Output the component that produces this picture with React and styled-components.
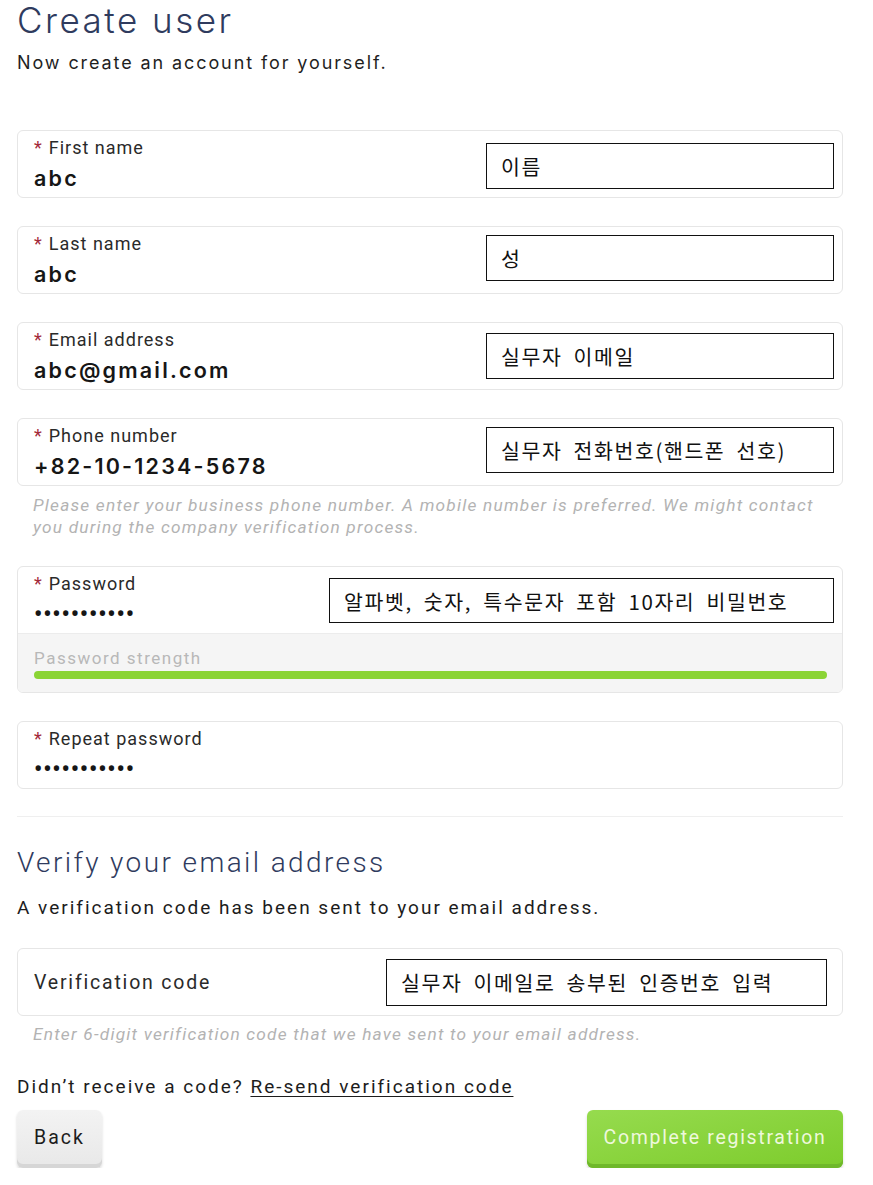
import React from 'react'
import styled, { createGlobalStyle } from 'styled-components'

const GlobalStyle = createGlobalStyle`
  body {
    margin: 0;
    background: #ffffff;
    font-family: Roboto, 'Liberation Sans', sans-serif;
    color: #1c1c1c;
  }
`

const Page = styled.div`
  width: 826px;
  padding: 0 30px 0 17px;
  display: flex;
  flex-direction: column;
`

const Title = styled.h1`
  margin: 0;
  font-family: Inter, Roboto, sans-serif;
  font-weight: 300;
  font-size: 35px;
  line-height: 40px;
  letter-spacing: 2.5px;
  color: #2f3b5e;
`

const Lead = styled.p`
  margin: 3px 0 0;
  font-family: Inter, Roboto, sans-serif;
  font-size: 18px;
  line-height: 40px;
  letter-spacing: 1.9px;
  color: #1f1f1f;
`

const Card = styled.div`
  margin-top: ${(p) => p.mt}px;
  border: 1px solid #e6e6e6;
  border-radius: 6px;
  background: #fff;
  overflow: hidden;
`

const CardRow = styled.div`
  height: 66px;
  display: flex;
  align-items: ${(p) => (p.center ? 'center' : 'flex-start')};
  justify-content: space-between;
  padding: 0 8px 0 16px;
`

const FieldCol = styled.div`
  display: flex;
  flex-direction: column;
  padding-top: 6px;
`

const Label = styled.div`
  font-size: 18px;
  line-height: 22px;
  letter-spacing: 1px;
  color: #2a2a2a;
`

const Star = styled.span`
  color: #a32a3a;
  margin-right: 7px;
  letter-spacing: 0;
`

const Value = styled.div`
  font-family: Inter, Roboto, sans-serif;
  font-weight: 600;
  font-size: 21.5px;
  line-height: 30px;
  margin-top: 4px;
  letter-spacing: 2.2px;
  color: #161616;
`

const Dots = styled.div`
  font-family: Roboto, sans-serif;
  font-weight: 700;
  font-size: 23px;
  line-height: 30px;
  margin-top: 5px;
  letter-spacing: 0.9px;
  color: #161616;
`

const Note = styled.div`
  margin-top: ${(p) => (p.mt ? p.mt : 0)}px;
  margin-right: ${(p) => (p.mr ? p.mr : 0)}px;
  width: ${(p) => p.w}px;
  height: ${(p) => p.h}px;
  border: 1px solid #111;
  background: #fff;
  display: flex;
  align-items: center;
  padding-left: 14px;
  box-sizing: border-box;
  font-family: 'Noto Sans CJK KR', sans-serif;
  font-size: 20.5px;
  letter-spacing: 1.6px;
  word-spacing: 5px;
  color: #111;
  white-space: pre;
`

const Hint = styled.div`
  margin-top: ${(p) => p.mt}px;
  padding-left: 16px;
  font-style: italic;
  font-size: 17.3px;
  line-height: 22px;
  letter-spacing: 1.2px;
  color: #b3b3b3;
`

const Strength = styled.div`
  background: #f5f5f5;
  border-top: 1px solid #ececec;
  padding: 13px 15px 13px 16px;
`

const StrengthLabel = styled.div`
  font-size: 17px;
  line-height: 22px;
  letter-spacing: 1.5px;
  color: #b8b8b8;
`

const Bar = styled.div`
  margin-top: 2px;
  height: 8px;
  border-radius: 4px;
  background: #8bd435;
`

const Divider = styled.hr`
  margin: 27px 0 0;
  border: 0;
  border-top: 1px solid #efefef;
`

const SubTitle = styled.h2`
  margin: 28px 0 0;
  font-weight: 300;
  font-size: 28px;
  line-height: 36px;
  letter-spacing: 2.4px;
  color: #2f3b5e;
`

const Text = styled.p`
  margin: ${(p) => p.mt}px 0 0;
  font-size: 19px;
  line-height: 24px;
  letter-spacing: 2px;
  color: #1c1c1c;
`

const CodeLabel = styled.div`
  font-size: 19.5px;
  letter-spacing: 1.8px;
  color: #2a2a2a;
`

const Link = styled.a`
  color: #1c1c1c;
  text-decoration: underline;
  text-underline-offset: 3px;
`

const Actions = styled.div`
  margin-top: 11px;
  display: flex;
  justify-content: space-between;
  align-items: flex-start;
`

const Button = styled.button`
  height: 58px;
  width: ${(p) => (p.primary ? '256px' : '85px')};
  padding: 0 0 4px;
  border: 0;
  border-radius: 6px;
  font-family: Roboto, sans-serif;
  font-size: 19.5px;
  letter-spacing: ${(p) => (p.primary ? 1.7 : 2)}px;
  color: ${(p) => (p.primary ? '#eef8dc' : '#1c1c1c')};
  background: ${(p) =>
    p.primary
      ? 'linear-gradient(to bottom right, #96db4e, #7dcc2c)'
      : 'linear-gradient(to bottom, #f3f3f3, #e8e8e8)'};
  box-shadow: ${(p) =>
    p.primary
      ? 'inset 0 -4px 0 #6fb82a, 0 2px 3px rgba(0,0,0,0.15)'
      : 'inset 0 -4px 0 #d6d6d6, 0 2px 3px rgba(0,0,0,0.15)'};
`

const fields = [
  { label: 'First name', value: 'abc', note: '이름', noteTop: 12, mt: 47 },
  { label: 'Last name', value: 'abc', note: '성', noteTop: 8, mt: 28 },
  { label: 'Email address', value: 'abc@gmail.com', note: '실무자 이메일', noteTop: 10, mt: 28 },
  { label: 'Phone number', value: '+82-10-1234-5678', note: '실무자 전화번호(핸드폰 선호)', noteTop: 8, mt: 28 },
]

const App = () => (
  <>
    <GlobalStyle />
    <Page>
      <Title>Create user</Title>
      <Lead>Now create an account for yourself.</Lead>

      {fields.map((f) => (
        <Card key={f.label} mt={f.mt}>
          <CardRow>
            <FieldCol>
              <Label>
                <Star>*</Star>
                {f.label}
              </Label>
              <Value>{f.value}</Value>
            </FieldCol>
            <Note mt={f.noteTop} w={348} h={46}>
              {f.note}
            </Note>
          </CardRow>
        </Card>
      ))}
      <Hint mt={8}>
        Please enter your business phone number. A mobile number is preferred. We might contact
        you during the company verification process.
      </Hint>

      <Card mt={28}>
        <CardRow>
          <FieldCol>
            <Label>
              <Star>*</Star>Password
            </Label>
            <Dots>•••••••••••</Dots>
          </FieldCol>
          <Note mt={11} w={505} h={45}>
            알파벳, 숫자, 특수문자 포함 10자리 비밀번호
          </Note>
        </CardRow>
        <Strength>
          <StrengthLabel>Password strength</StrengthLabel>
          <Bar />
        </Strength>
      </Card>

      <Card mt={28}>
        <CardRow>
          <FieldCol>
            <Label>
              <Star>*</Star>Repeat password
            </Label>
            <Dots>•••••••••••</Dots>
          </FieldCol>
        </CardRow>
      </Card>

      <Divider />
      <SubTitle>Verify your email address</SubTitle>
      <Text mt={15}>A verification code has been sent to your email address.</Text>

      <Card mt={28}>
        <CardRow center>
          <CodeLabel>Verification code</CodeLabel>
          <Note w={441} h={47} mr={7}>
            실무자 이메일로 송부된 인증번호 입력
          </Note>
        </CardRow>
      </Card>
      <Hint mt={7}>Enter 6-digit verification code that we have sent to your email address.</Hint>

      <Text mt={30}>
        Didn’t receive a code? <Link href="#">Re-send verification code</Link>
      </Text>

      <Actions>
        <Button>Back</Button>
        <Button primary>Complete registration</Button>
      </Actions>
    </Page>
  </>
)

export default App
